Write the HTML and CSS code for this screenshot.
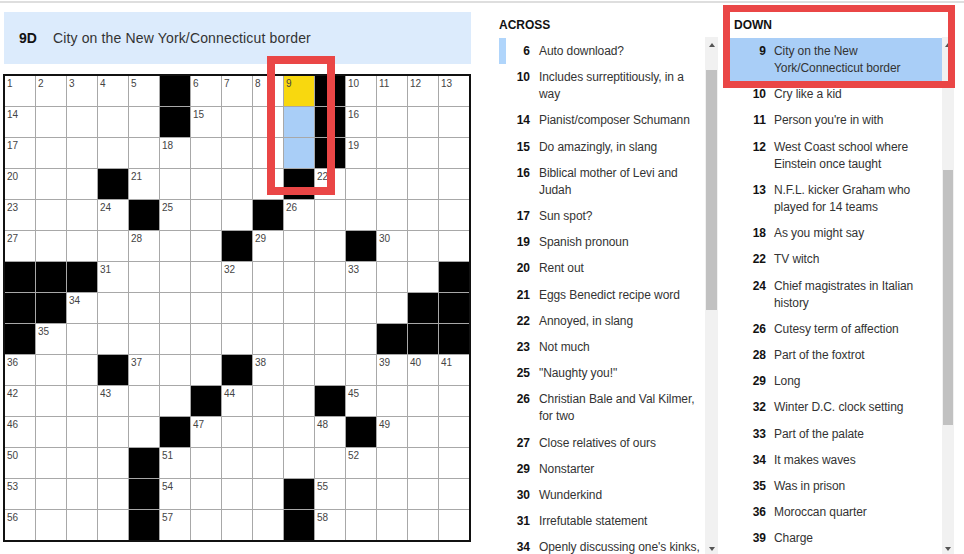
FILE: index.html
```html
<!DOCTYPE html>
<html lang="en">
<head>
<meta charset="utf-8">
<title>Crossword</title>
<link rel="stylesheet" href="styles.css">
</head>
<body>
<div class="topline"></div>
<div class="main">
  <div class="puzzle">
    <div class="cluebar"><span class="lbl">9D</span><span class="ctext">City on the New York/Connecticut border</span></div>
    <div class="grid">
      <!-- row 0 -->
      <div class="c"><span class="n">1</span></div><div class="c"><span class="n">2</span></div><div class="c"><span class="n">3</span></div><div class="c"><span class="n">4</span></div><div class="c"><span class="n">5</span></div><div class="c b"></div><div class="c"><span class="n">6</span></div><div class="c"><span class="n">7</span></div><div class="c"><span class="n">8</span></div><div class="c sel"><span class="n">9</span></div><div class="c b"></div><div class="c"><span class="n">10</span></div><div class="c"><span class="n">11</span></div><div class="c"><span class="n">12</span></div><div class="c"><span class="n">13</span></div>
      <!-- row 1 -->
      <div class="c"><span class="n">14</span></div><div class="c"></div><div class="c"></div><div class="c"></div><div class="c"></div><div class="c b"></div><div class="c"><span class="n">15</span></div><div class="c"></div><div class="c"></div><div class="c hl"></div><div class="c b"></div><div class="c"><span class="n">16</span></div><div class="c"></div><div class="c"></div><div class="c"></div>
      <!-- row 2 -->
      <div class="c"><span class="n">17</span></div><div class="c"></div><div class="c"></div><div class="c"></div><div class="c"></div><div class="c"><span class="n">18</span></div><div class="c"></div><div class="c"></div><div class="c"></div><div class="c hl"></div><div class="c b"></div><div class="c"><span class="n">19</span></div><div class="c"></div><div class="c"></div><div class="c"></div>
      <!-- row 3 -->
      <div class="c"><span class="n">20</span></div><div class="c"></div><div class="c"></div><div class="c b"></div><div class="c"><span class="n">21</span></div><div class="c"></div><div class="c"></div><div class="c"></div><div class="c"></div><div class="c b"></div><div class="c"><span class="n">22</span></div><div class="c"></div><div class="c"></div><div class="c"></div><div class="c"></div>
      <!-- row 4 -->
      <div class="c"><span class="n">23</span></div><div class="c"></div><div class="c"></div><div class="c"><span class="n">24</span></div><div class="c b"></div><div class="c"><span class="n">25</span></div><div class="c"></div><div class="c"></div><div class="c b"></div><div class="c"><span class="n">26</span></div><div class="c"></div><div class="c"></div><div class="c"></div><div class="c"></div><div class="c"></div>
      <!-- row 5 -->
      <div class="c"><span class="n">27</span></div><div class="c"></div><div class="c"></div><div class="c"></div><div class="c"><span class="n">28</span></div><div class="c"></div><div class="c"></div><div class="c b"></div><div class="c"><span class="n">29</span></div><div class="c"></div><div class="c"></div><div class="c b"></div><div class="c"><span class="n">30</span></div><div class="c"></div><div class="c"></div>
      <!-- row 6 -->
      <div class="c b"></div><div class="c b"></div><div class="c b"></div><div class="c"><span class="n">31</span></div><div class="c"></div><div class="c"></div><div class="c"></div><div class="c"><span class="n">32</span></div><div class="c"></div><div class="c"></div><div class="c"></div><div class="c"><span class="n">33</span></div><div class="c"></div><div class="c"></div><div class="c b"></div>
      <!-- row 7 -->
      <div class="c b"></div><div class="c b"></div><div class="c"><span class="n">34</span></div><div class="c"></div><div class="c"></div><div class="c"></div><div class="c"></div><div class="c"></div><div class="c"></div><div class="c"></div><div class="c"></div><div class="c"></div><div class="c"></div><div class="c b"></div><div class="c b"></div>
      <!-- row 8 -->
      <div class="c b"></div><div class="c"><span class="n">35</span></div><div class="c"></div><div class="c"></div><div class="c"></div><div class="c"></div><div class="c"></div><div class="c"></div><div class="c"></div><div class="c"></div><div class="c"></div><div class="c"></div><div class="c b"></div><div class="c b"></div><div class="c b"></div>
      <!-- row 9 -->
      <div class="c"><span class="n">36</span></div><div class="c"></div><div class="c"></div><div class="c b"></div><div class="c"><span class="n">37</span></div><div class="c"></div><div class="c"></div><div class="c b"></div><div class="c"><span class="n">38</span></div><div class="c"></div><div class="c"></div><div class="c"></div><div class="c"><span class="n">39</span></div><div class="c"><span class="n">40</span></div><div class="c"><span class="n">41</span></div>
      <!-- row 10 -->
      <div class="c"><span class="n">42</span></div><div class="c"></div><div class="c"></div><div class="c"><span class="n">43</span></div><div class="c"></div><div class="c"></div><div class="c b"></div><div class="c"><span class="n">44</span></div><div class="c"></div><div class="c"></div><div class="c b"></div><div class="c"><span class="n">45</span></div><div class="c"></div><div class="c"></div><div class="c"></div>
      <!-- row 11 -->
      <div class="c"><span class="n">46</span></div><div class="c"></div><div class="c"></div><div class="c"></div><div class="c"></div><div class="c b"></div><div class="c"><span class="n">47</span></div><div class="c"></div><div class="c"></div><div class="c"></div><div class="c"><span class="n">48</span></div><div class="c b"></div><div class="c"><span class="n">49</span></div><div class="c"></div><div class="c"></div>
      <!-- row 12 -->
      <div class="c"><span class="n">50</span></div><div class="c"></div><div class="c"></div><div class="c"></div><div class="c b"></div><div class="c"><span class="n">51</span></div><div class="c"></div><div class="c"></div><div class="c"></div><div class="c"></div><div class="c"></div><div class="c"><span class="n">52</span></div><div class="c"></div><div class="c"></div><div class="c"></div>
      <!-- row 13 -->
      <div class="c"><span class="n">53</span></div><div class="c"></div><div class="c"></div><div class="c"></div><div class="c b"></div><div class="c"><span class="n">54</span></div><div class="c"></div><div class="c"></div><div class="c"></div><div class="c b"></div><div class="c"><span class="n">55</span></div><div class="c"></div><div class="c"></div><div class="c"></div><div class="c"></div>
      <!-- row 14 -->
      <div class="c"><span class="n">56</span></div><div class="c"></div><div class="c"></div><div class="c"></div><div class="c b"></div><div class="c"><span class="n">57</span></div><div class="c"></div><div class="c"></div><div class="c"></div><div class="c b"></div><div class="c"><span class="n">58</span></div><div class="c"></div><div class="c"></div><div class="c"></div><div class="c"></div>
    </div>
  </div>

  <div class="panel across">
    <div class="phead">ACROSS</div>
    <div class="pbody">
      <ol class="list">
        <li class="item on"><span class="num">6</span><span class="txt">Auto download?</span></li>
        <li class="item"><span class="num">10</span><span class="txt">Includes surreptitiously, in a way</span></li>
        <li class="item"><span class="num">14</span><span class="txt">Pianist/composer Schumann</span></li>
        <li class="item"><span class="num">15</span><span class="txt">Do amazingly, in slang</span></li>
        <li class="item"><span class="num">16</span><span class="txt">Biblical mother of Levi and Judah</span></li>
        <li class="item"><span class="num">17</span><span class="txt">Sun spot?</span></li>
        <li class="item"><span class="num">19</span><span class="txt">Spanish pronoun</span></li>
        <li class="item"><span class="num">20</span><span class="txt">Rent out</span></li>
        <li class="item"><span class="num">21</span><span class="txt">Eggs Benedict recipe word</span></li>
        <li class="item"><span class="num">22</span><span class="txt">Annoyed, in slang</span></li>
        <li class="item"><span class="num">23</span><span class="txt">Not much</span></li>
        <li class="item"><span class="num">25</span><span class="txt">"Naughty you!"</span></li>
        <li class="item"><span class="num">26</span><span class="txt">Christian Bale and Val Kilmer, for two</span></li>
        <li class="item"><span class="num">27</span><span class="txt">Close relatives of ours</span></li>
        <li class="item"><span class="num">29</span><span class="txt">Nonstarter</span></li>
        <li class="item"><span class="num">30</span><span class="txt">Wunderkind</span></li>
        <li class="item"><span class="num">31</span><span class="txt">Irrefutable statement</span></li>
        <li class="item"><span class="num">34</span><span class="txt">Openly discussing one's kinks,</span></li>
      </ol>
      <div class="sb">
        <span class="arr up"></span>
        <span class="thumb"></span>
        <span class="arr dn"></span>
      </div>
    </div>
  </div>

  <div class="panel down">
    <div class="phead">DOWN</div>
    <div class="pbody">
      <ol class="list">
        <li class="item cur"><span class="num">9</span><span class="txt">City on the New York/Connecticut border</span></li>
        <li class="item"><span class="num">10</span><span class="txt">Cry like a kid</span></li>
        <li class="item"><span class="num">11</span><span class="txt">Person you're in with</span></li>
        <li class="item"><span class="num">12</span><span class="txt">West Coast school where Einstein once taught</span></li>
        <li class="item"><span class="num">13</span><span class="txt">N.F.L. kicker Graham who played for 14 teams</span></li>
        <li class="item"><span class="num">18</span><span class="txt">As you might say</span></li>
        <li class="item"><span class="num">22</span><span class="txt">TV witch</span></li>
        <li class="item"><span class="num">24</span><span class="txt">Chief magistrates in Italian history</span></li>
        <li class="item"><span class="num">26</span><span class="txt">Cutesy term of affection</span></li>
        <li class="item"><span class="num">28</span><span class="txt">Part of the foxtrot</span></li>
        <li class="item"><span class="num">29</span><span class="txt">Long</span></li>
        <li class="item"><span class="num">32</span><span class="txt">Winter D.C. clock setting</span></li>
        <li class="item"><span class="num">33</span><span class="txt">Part of the palate</span></li>
        <li class="item"><span class="num">34</span><span class="txt">It makes waves</span></li>
        <li class="item"><span class="num">35</span><span class="txt">Was in prison</span></li>
        <li class="item"><span class="num">36</span><span class="txt">Moroccan quarter</span></li>
        <li class="item"><span class="num">39</span><span class="txt">Charge</span></li>
      </ol>
      <div class="sb">
        <span class="arr up"></span>
        <span class="thumb"></span>
        <span class="arr dn"></span>
      </div>
    </div>
  </div>
</div>

<div class="anno anno-grid"></div>
<div class="anno anno-down"></div>
</body>
</html>
```

FILE: styles.css
```css
* { box-sizing: border-box; }
html, body { margin: 0; padding: 0; }
body {
  width: 964px;
  height: 554px;
  overflow: hidden;
  background: #fff;
  font-family: "Liberation Sans", Arial, sans-serif;
  color: #333;
  position: relative;
}
.topline { height: 2px; margin-top: 1px; background: #dedede; }
.main { display: flex; margin-top: 9px; padding-left: 3px; }

.puzzle { width: 468px; display: flex; flex-direction: column; gap: 10px; flex: none; }
.cluebar {
  height: 52px;
  margin-left: 1px;
  background: #dcebfc;
  display: flex;
  align-items: center;
  padding-left: 15px;
  font-size: 14px;
  color: #333;
}
.cluebar .lbl { font-weight: bold; color: #121212; margin-right: 16px; }
.cluebar .ctext { letter-spacing: 0.15px; }

.grid {
  display: grid;
  grid-template-columns: repeat(15, 30px);
  grid-auto-rows: 30px;
  gap: 1px;
  background: #a8a8a8;
  border: 2px solid #111;
  width: 468px;
}
.c { background: #fff; position: relative; }
.c.b { background: #000; }
.c.sel { background: #f8d80f; }
.c.hl { background: #a9cef7; }
.n {
  position: absolute;
  left: 2px;
  top: 3px;
  font-size: 10px;
  line-height: 10px;
  color: #444;
}

.panel { display: flex; flex-direction: column; height: 542px; flex: none; }
.across { width: 219px; margin-left: 28px; }
.down { width: 224px; margin-left: 12px; }
.phead {
  font-size: 12px;
  font-weight: bold;
  color: #121212;
  line-height: 14px;
  padding: 6px 0 5px 0;
}
.down .phead { padding-left: 4px; }
.pbody { flex: 1; display: flex; min-height: 0; }
.list { flex: 1; margin: 0; padding: 1px 0 0 0; list-style: none; overflow: hidden; }
.item {
  display: flex;
  padding: 5px 0 4px 0;
  border-left: 7px solid transparent;
  font-size: 12px;
  line-height: 17.15px;
}
.item.on { border-left-color: #b0d5fb; }
.item.cur { background: #a9cef7; }
.num { width: 24px; flex: none; text-align: right; font-weight: bold; color: #121212; }
.txt { margin-left: 9px; width: 162px; letter-spacing: -0.08px; color: #333; }
.down .item { padding-left: 5px; }
.down .txt { margin-left: 8px; width: 160px; }

.sb {
  flex: none;
  width: 13px;
  background: #f1f1f1;
  display: flex;
  flex-direction: column;
  align-items: center;
}
.down .sb { width: 12px; }
.thumb { width: 11px; background: #c1c1c1; }
.down .thumb { width: 10px; }
.across .thumb { margin-top: 23px; height: 240px; }
.down .thumb { margin-top: 123px; height: 255px; }
.arr { width: 0; height: 0; border-left: 3px solid transparent; border-right: 3px solid transparent; }
.arr.up { margin-top: 6px; border-bottom: 4px solid #555; }
.arr.dn { margin-top: auto; margin-bottom: 3px; border-top: 4px solid #555; }

.anno { position: absolute; border: 8px solid #ea4646; pointer-events: none; }
.anno-grid { left: 267px; top: 56px; width: 68px; height: 139px; }
.anno-down { left: 723px; top: 5px; width: 232px; height: 83px; border-width: 7px; }
```
